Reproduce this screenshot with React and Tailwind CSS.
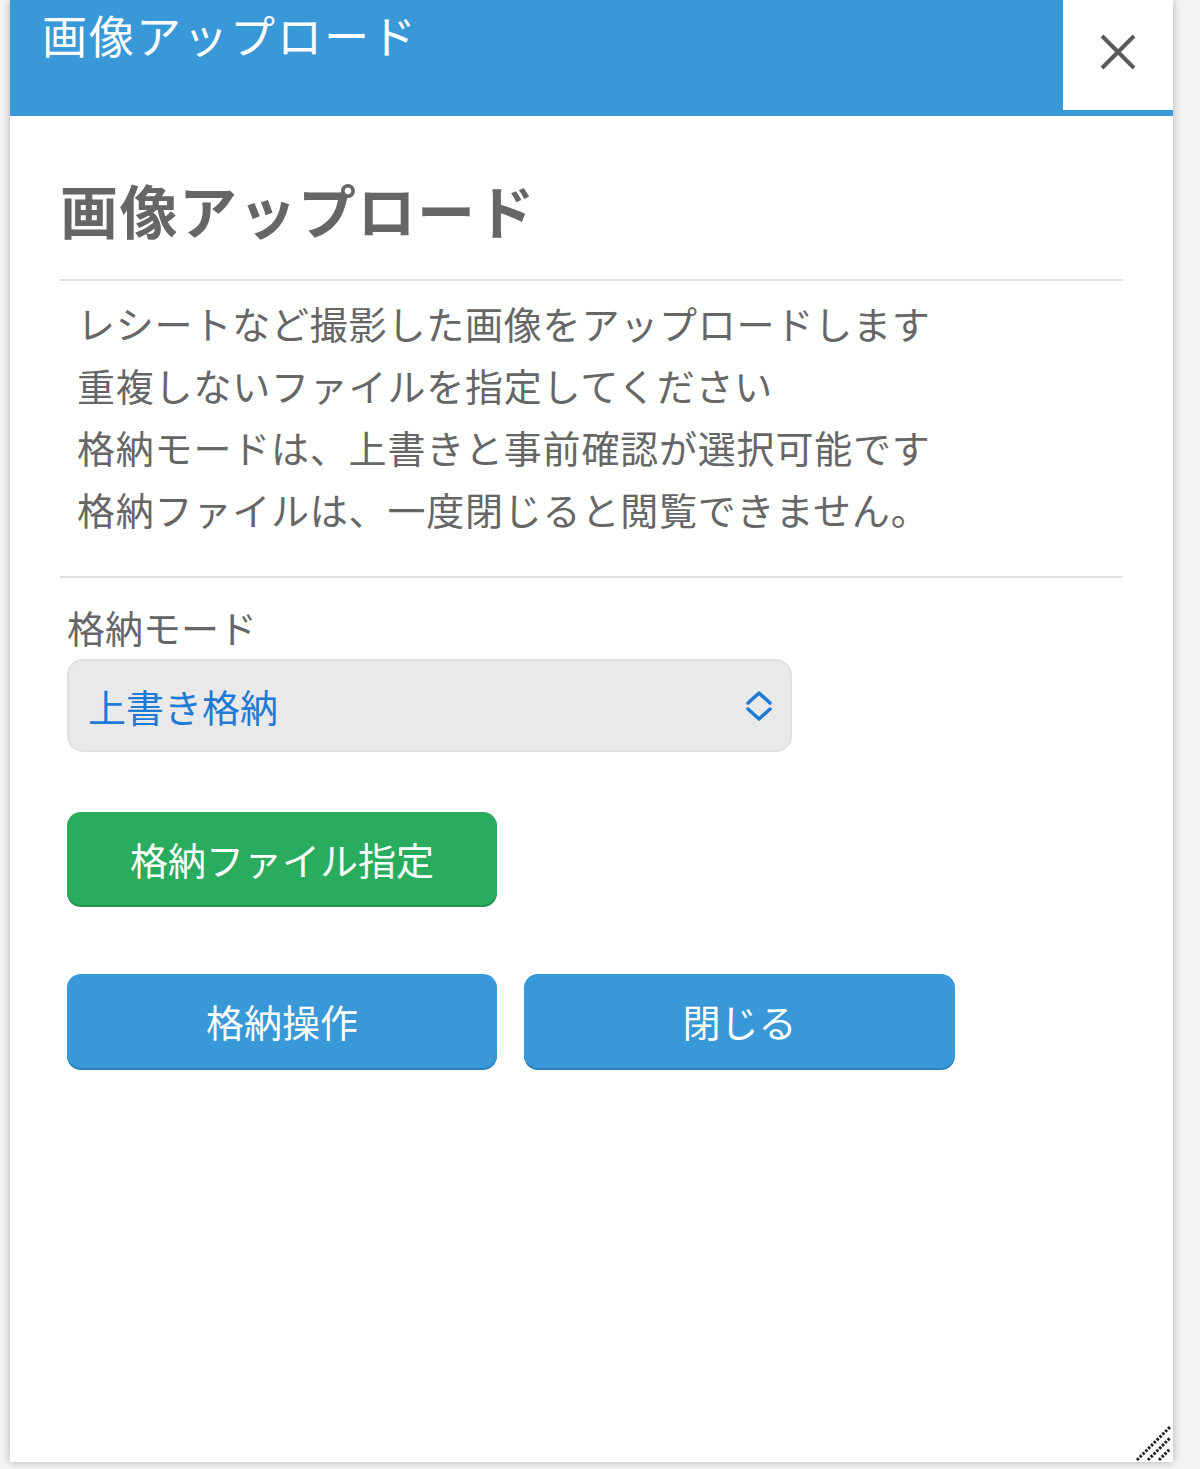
import React from "react";

const font = { fontFamily: '"Noto Sans CJK JP", "Noto Sans", sans-serif' };

export default function App() {
  return (
    <div className="w-[1200px] h-[1469px] bg-[#f3f3f3] pl-[10px] overflow-hidden" style={font}>
      <div className="relative w-[1163px] h-[1462px] bg-white shadow-[0_0_8px_rgba(0,0,0,0.28)] flex flex-col">
        {/* header */}
        <div className="flex h-[116px] border-b-[6px] border-[#3898d8]">
          <div className="flex-1 bg-[#3898d8] pl-[32px] pt-[12px]">
            <div className="text-[45px] leading-[45px] text-white font-normal tracking-[2px]">画像アップロード</div>
          </div>
          <div className="w-[110px] bg-white flex items-center justify-center">
            <svg width="36" height="36" viewBox="0 0 36 36" className="mt-[-6px]">
              <path d="M2 2 L34 34 M34 2 L2 34" stroke="#5a5a5a" strokeWidth="4" />
            </svg>
          </div>
        </div>

        {/* content */}
        <div className="px-[50px] flex flex-col">
          <h1 className="mt-[64px] text-[58px] leading-[58px] font-bold text-[#666] tracking-[1.5px]">画像アップロード</h1>
          <div className="mt-[41px] h-[2px] bg-[#e0e0e0]" />
          <div className="mt-[11px] pl-[17px] text-[38px] leading-[62px] text-[#666] tracking-[0.8px]">
            <div>レシートなど撮影した画像をアップロードします</div>
            <div>重複しないファイルを指定してください</div>
            <div>格納モードは、上書きと事前確認が選択可能です</div>
            <div>格納ファイルは、一度閉じると閲覧できません。</div>
          </div>
          <div className="mt-[36px] h-[2px] bg-[#e0e0e0]" />

          <div className="pl-[7px]">
            <div className="mt-[30px] text-[38px] leading-[38px] text-[#666]">格納モード</div>
            <div className="mt-[13px] w-[725px] h-[93px] rounded-[16px] bg-[#e9e9e9] border-2 border-[#e0e0e0] flex items-center justify-between pl-[19px] pr-[16px]">
              <span className="text-[38px] leading-[38px] text-[#1f7ad6]">上書き格納</span>
              <svg width="30" height="34" viewBox="0 0 30 34">
                <path d="M4 14 L15 4 L26 14" fill="none" stroke="#1f7ad6" strokeWidth="3.5" strokeLinecap="round" strokeLinejoin="round" />
                <path d="M4 20 L15 30 L26 20" fill="none" stroke="#1f7ad6" strokeWidth="3.5" strokeLinecap="round" strokeLinejoin="round" />
              </svg>
            </div>

            <button className="mt-[60px] w-[430px] h-[93px] rounded-[14px] bg-[#2aac5f] shadow-[0_2px_0_#23924f] text-white text-[38px] leading-[38px] flex items-center justify-center">
              格納ファイル指定
            </button>

            <div className="mt-[69px] flex gap-[27px]">
              <button className="w-[430px] h-[94px] rounded-[14px] bg-[#3898d8] shadow-[0_2px_0_#2d80b9] text-white text-[38px] leading-[38px] flex items-center justify-center">
                格納操作
              </button>
              <button className="w-[431px] h-[94px] rounded-[14px] bg-[#3898d8] shadow-[0_2px_0_#2d80b9] text-white text-[38px] leading-[38px] flex items-center justify-center">
                閉じる
              </button>
            </div>
          </div>
        </div>

        {/* resize grip */}
        <svg width="38" height="38" viewBox="0 0 38 38" className="absolute right-[1px] bottom-[0px]">
          <path d="M3 36 L36 3" stroke="#222" strokeWidth="3" strokeDasharray="2.5 1.5" />
          <path d="M14 36 L36 14" stroke="#222" strokeWidth="3" strokeDasharray="2.5 1.5" />
          <path d="M25 36 L36 25" stroke="#222" strokeWidth="3" strokeDasharray="2.5 1.5" />
        </svg>
      </div>
    </div>
  );
}
